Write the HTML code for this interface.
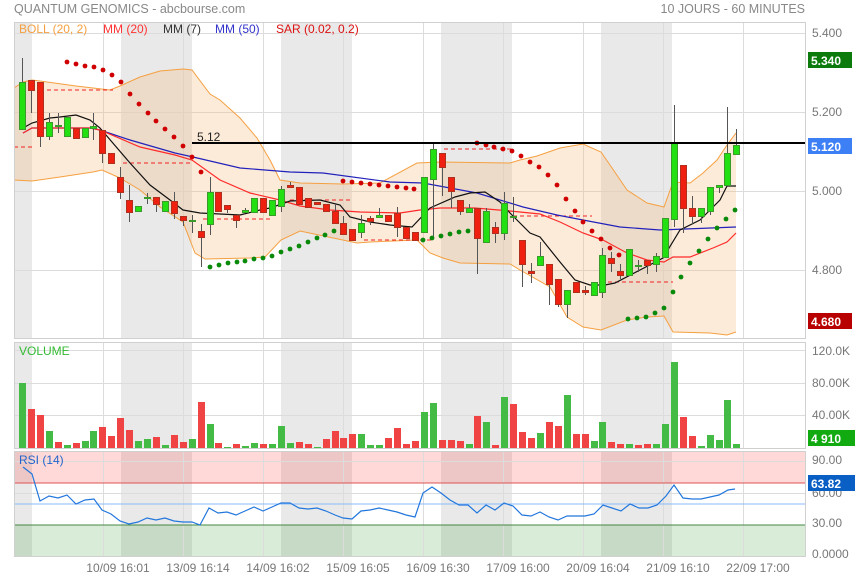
<!DOCTYPE html>
<html><head><meta charset="utf-8">
<style>
html,body{margin:0;padding:0;background:#fff;width:855px;height:579px;overflow:hidden}
svg{display:block;font-family:"Liberation Sans",sans-serif}
</style></head>
<body>
<svg id="s" width="855" height="579" xmlns="http://www.w3.org/2000/svg">
<g id="bg"></g>
<g id="grid" stroke="#dcdcdc" stroke-width="1"></g>
<g id="bb"></g>
<g id="lines"></g>
<g id="candles"></g>
<g id="dots"></g>
<g id="vol"></g>
<g id="rsi"></g>
<line x1="192" y1="143" x2="805" y2="143" stroke="#000" stroke-width="2"/>
<text x="197" y="141" font-size="12" fill="#222">5.12</text>
<g fill="none" stroke="#d0d0d0">
<rect x="14.5" y="22.5" width="791" height="316"/>
<rect x="14.5" y="342.5" width="791" height="106"/>
<rect x="14.5" y="451.5" width="791" height="105"/>
</g>
<text x="14" y="13" font-size="12.5" fill="#888">QUANTUM GENOMICS - abcbourse.com</text>
<text x="805" y="13" font-size="12.5" fill="#888" text-anchor="end">10 JOURS - 60 MINUTES</text>
<g font-size="12">
<text x="19" y="33" fill="#f5a040">BOLL (20, 2)</text>
<text x="103" y="33" fill="#ff3333">MM (20)</text>
<text x="163" y="33" fill="#333">MM (7)</text>
<text x="215" y="33" fill="#3333cc">MM (50)</text>
<text x="276" y="33" fill="#dd1111">SAR (0.02, 0.2)</text>
<text x="19" y="355" fill="#33bb33">VOLUME</text>
<text x="19" y="464" fill="#2266cc">RSI (14)</text>
</g>
<g font-size="12" fill="#777">
<text x="812" y="37">5.400</text>
<text x="812" y="116">5.200</text>
<text x="812" y="195">5.000</text>
<text x="812" y="274">4.800</text>
<text x="812" y="355">120.0K</text>
<text x="812" y="387">80.00K</text>
<text x="812" y="419">40.00K</text>
<text x="812" y="464">90.00</text>
<text x="812" y="497">60.00</text>
<text x="812" y="527">30.00</text>
<text x="812" y="558">0.0000</text>
</g>
<rect x="808" y="52" width="44" height="16" fill="#0d7a0d"/>
<text x="811" y="65" font-size="12" font-weight="bold" fill="#fff">5.340</text>
<rect x="808" y="138" width="44" height="16" fill="#3d7ff5"/>
<text x="811" y="151" font-size="12" font-weight="bold" fill="#fff">5.120</text>
<rect x="808" y="313" width="44" height="16" fill="#b80000"/>
<text x="811" y="326" font-size="12" font-weight="bold" fill="#fff">4.680</text>
<rect x="808" y="430" width="47" height="16" fill="#11aa11"/>
<text x="811" y="443" font-size="12" font-weight="bold" fill="#fff">4 910</text>
<rect x="808" y="475" width="47" height="16" fill="#0a5fc4"/>
<text x="811" y="488" font-size="12" font-weight="bold" fill="#fff">63.82</text>
<g font-size="12" fill="#777" text-anchor="middle">
<text x="118" y="572">10/09 16:01</text>
<text x="198" y="572">13/09 16:14</text>
<text x="278" y="572">14/09 16:02</text>
<text x="358" y="572">15/09 16:05</text>
<text x="438" y="572">16/09 16:30</text>
<text x="518" y="572">17/09 16:00</text>
<text x="598" y="572">20/09 16:04</text>
<text x="678" y="572">21/09 16:10</text>
<text x="758" y="572">22/09 17:00</text>
</g>
</svg>
<script>
var NS="http://www.w3.org/2000/svg";
function el(p,t,a){var e=document.createElementNS(NS,t);for(var k in a)e.setAttribute(k,a[k]);document.getElementById(p).appendChild(e);return e;}
// gray bands
[[14,32],[121,192],[281,352],[441,512],[601,672]].forEach(function(b){
 [[22,338],[342,448],[451,556]].forEach(function(p){el("bg","rect",{x:b[0],y:p[0],width:b[1]-b[0],height:p[1]-p[0],fill:"#e9e9e9"});});
});
// rsi zones
el("bg","rect",{x:14,y:451,width:791,height:32,fill:"rgba(255,60,60,0.2)"});
el("bg","rect",{x:14,y:525,width:791,height:31,fill:"rgba(60,160,60,0.2)"});
// grid
for(var x=103;x<=743;x+=80){[[22,338],[342,448],[451,556]].forEach(function(p){el("grid","line",{x1:x+.5,y1:p[0],x2:x+.5,y2:p[1]});});}
[33,112,191,270].forEach(function(y){el("grid","line",{x1:14,y1:y+.5,x2:805,y2:y+.5});});
[350,383,415].forEach(function(y){el("grid","line",{x1:14,y1:y+.5,x2:805,y2:y+.5});});
[461,493].forEach(function(y){el("grid","line",{x1:14,y1:y+.5,x2:805,y2:y+.5});});
el("grid","line",{x1:14,y1:483,x2:805,y2:483,stroke:"#dd5555"});
el("grid","line",{x1:14,y1:504,x2:805,y2:504,stroke:"#88bbff"});
el("grid","line",{x1:14,y1:525,x2:805,y2:525,stroke:"#448844"});
function pts(a){return a.map(function(p){return p.join(",")}).join(" ");}
var up=[[14,88],[23,82],[32,80],[40,81],[76,86],[110,90],[120,86],[140,77],[160,71],[183,69],[192,70],[210,94],[220,100],[240,118],[257,138],[270,160],[280,180],[300,183],[343,184],[380,183],[417,163],[440,162],[510,163],[520,160],[537,156],[560,148],[583,144],[601,152],[610,165],[627,190],[647,203],[664,207],[673,182],[690,183],[703,173],[717,160],[727,145],[736,133]];
var lo=[[14,180],[32,181],[60,177],[93,172],[102,170],[120,178],[140,190],[160,207],[183,222],[195,253],[205,259],[250,258],[265,257],[281,240],[300,231],[357,243],[370,242],[417,240],[430,253],[443,258],[460,263],[510,264],[520,270],[550,287],[567,317],[583,327],[601,330],[627,320],[647,317],[664,316],[673,332],[710,333],[727,335],[736,332]];
el("bb","polygon",{points:pts(up.concat(lo.slice().reverse())),fill:"rgba(248,190,130,0.3)"});
el("bb","polyline",{points:pts(up),fill:"none",stroke:"#f5a040","stroke-width":1});
el("bb","polyline",{points:pts(lo),fill:"none",stroke:"#f5a040","stroke-width":1});
// dashed red
[[14,33,147],[40,113,90],[123,192,163],[203,273,219],[290,352,200],[364,433,240],[444,512,149],[513,592,216],[601,673,282]].forEach(function(d){el("lines","line",{x1:d[0],x2:d[1],y1:d[2],y2:d[2],stroke:"#ee2222","stroke-dasharray":"4,3"});});
var mm50=[[23,133],[32,128],[90,128],[100,130],[130,140],[175,153],[193,157],[240,168],[290,172],[323,173],[390,182],[423,183],[450,188],[477,193],[523,207],[557,215],[583,220],[620,227],[660,230],[736,227]];
var mm20=[[23,133],[32,128],[90,128],[100,130],[140,147],[175,155],[192,160],[220,180],[250,193],[280,200],[300,206],[330,210],[360,212],[400,213],[420,210],[440,208],[475,208],[510,211],[540,214],[560,222],[583,233],[603,240],[627,253],[647,260],[664,262],[673,257],[690,257],[713,248],[727,242],[736,233]];
var mm7=[[23,128],[32,123],[50,118],[60,117],[76,115],[90,120],[100,128],[130,163],[150,185],[170,200],[183,210],[200,213],[240,215],[260,210],[270,208],[290,201],[320,200],[340,205],[350,217],[370,222],[390,225],[412,227],[430,208],[455,197],[470,193],[485,192],[500,202],[510,213],[530,233],[540,237],[560,262],[575,280],[590,285],[605,285],[615,283],[640,270],[663,258],[680,230],[700,220],[720,200],[727,186],[736,186]];
el("lines","polyline",{points:pts(mm50),fill:"none",stroke:"#2222bb","stroke-width":1.2});
el("lines","polyline",{points:pts(mm20),fill:"none",stroke:"#ff2a2a","stroke-width":1.2});
el("lines","polyline",{points:pts(mm7),fill:"none",stroke:"#111","stroke-width":1.2});
var C=[[82,129,58,129,1],[80,90,80,113,0],[82,136,82,147,0],[122,136,113,140,1],[125,126,113,133,1],[117,136,117,136,1],[128,138,128,138,0],[128,137,128,137,1],[126,128,113,140,1],[130,153,130,163,0],[153,163,153,163,0],[177,192,167,199,0],[200,212,185,222,0],[206,211,206,211,1],[197,198,193,204,1],[197,204,197,212,0],[201,211,201,211,1],[201,213,192,219,0],[216,220,216,226,0],[220,221,215,233,1],[231,237,224,267,0],[192,224,177,235,1],[192,211,192,211,0],[205,209,205,213,0],[215,220,215,228,0],[210,212,208,212,1],[198,212,198,212,1],[198,212,198,212,0],[200,215,200,215,1],[189,206,186,212,1],[185,187,182,187,0],[187,204,187,204,0],[198,207,198,207,0],[202,204,202,204,0],[204,211,204,211,0],[211,223,204,223,0],[223,234,216,234,0],[229,240,229,240,0],[223,232,215,238,1],[218,221,216,225,0],[215,217,208,217,1],[215,221,215,221,0],[213,227,207,237,0],[227,238,227,238,0],[232,240,232,240,0],[177,232,177,232,1],[149,179,143,237,1],[153,167,153,196,0],[177,191,177,208,0],[200,211,200,215,0],[208,212,204,212,1],[208,238,208,274,0],[211,242,208,243,1],[227,233,222,243,0],[203,233,192,240,1],[216,217,197,222,1],[240,264,240,287,0],[271,273,263,283,0],[256,265,242,265,1],[264,284,264,305,0],[279,304,279,307,0],[290,304,290,318,1],[282,292,282,292,0],[290,292,286,295,0],[282,295,282,295,1],[255,292,248,298,1],[258,263,252,272,0],[271,275,264,279,0],[249,275,249,275,1],[265,266,260,272,1],[260,265,260,274,0],[256,264,253,272,1],[218,257,218,257,1],[143,219,105,227,1],[165,208,165,233,0],[208,216,196,224,0],[208,216,208,223,1],[187,211,187,215,1],[185,187,185,193,1],[153,185,107,185,1],[145,154,129,154,1]];
C.forEach(function(c,i){var x=Math.round(22+8.93*i);
 el("candles","line",{x1:x+.5,x2:x+.5,y1:c[2],y2:c[3],stroke:"#555"});
 el("candles","rect",{x:x-2.5,y:c[0]+.5,width:6,height:Math.max(1,c[1]-c[0]),fill:c[4]?"#22e011":"#f02010",stroke:c[4]?"#3a9a2a":"#b03020","stroke-width":1});
});
var R=[[67,62],[76,64],[85,66],[94,67],[103,70],[112,75],[121,82],[130,94],[139,104],[148,113],[156,121],[165,129],[174,137],[183,146],[192,157],[201,172],[343,181],[352,182],[361,183],[370,184],[379,185],[388,186],[397,187],[406,188],[414,189],[477,143],[486,145],[494,147],[503,149],[512,151],[521,156],[530,162],[539,167],[548,175],[557,185],[566,199],[575,211],[583,222],[592,231],[601,239],[610,248],[619,255]];
var G=[[210,267],[219,265],[228,263],[237,262],[245,261],[254,259],[263,258],[272,256],[281,252],[290,249],[299,246],[308,242],[317,238],[325,235],[334,231],[423,240],[432,238],[441,236],[450,234],[459,232],[468,231],[628,319],[637,318],[646,317],[655,313],[664,308],[673,292],[681,277],[690,263],[699,251],[708,239],[717,228],[726,219],[735,210]];
R.forEach(function(p){el("dots","circle",{cx:p[0],cy:p[1],r:2.4,fill:"#d00000"});});
G.forEach(function(p){el("dots","circle",{cx:p[0],cy:p[1],r:2.4,fill:"#0a8a0a"});});
var V=[[383,1],[409,0],[415,0],[431,1],[442,0],[445,1],[443,0],[441,1],[431,1],[427,0],[436,0],[418,0],[430,0],[441,1],[439,1],[437,0],[445,1],[435,0],[442,0],[439,1],[402,0],[424,1],[443,0],[447,1],[444,0],[446,1],[443,1],[444,0],[444,1],[426,1],[443,1],[442,0],[444,0],[447,1],[439,0],[431,0],[438,0],[434,0],[434,1],[445,1],[445,1],[438,0],[428,0],[444,0],[441,0],[412,1],[403,1],[440,0],[440,0],[441,0],[444,1],[416,0],[422,1],[445,0],[397,1],[404,0],[432,0],[438,0],[433,1],[422,0],[426,0],[395,1],[434,0],[434,0],[441,1],[422,1],[442,0],[444,0],[444,1],[445,0],[444,0],[444,1],[424,1],[362,1],[417,0],[436,0],[446,1],[435,1],[440,1],[400,1],[444,1]];
V.forEach(function(v,i){var x=Math.round(22+8.93*i);el("vol","rect",{x:x-3,y:v[0],width:7,height:448-v[0],fill:v[1]?"#44bb44":"#f04444"});});
var RS=[[23,467],[32,474],[40,501],[49,496],[58,498],[67,495],[76,504],[85,500],[94,499],[102,510],[111,514],[120,521],[129,524],[138,522],[147,518],[156,520],[165,518],[174,521],[183,522],[192,522],[200,525],[209,508],[218,513],[227,512],[236,515],[245,511],[254,507],[263,511],[272,507],[281,503],[290,503],[299,508],[308,509],[317,508],[326,511],[335,515],[343,518],[352,519],[361,511],[370,510],[379,508],[388,510],[397,512],[406,515],[415,517],[423,493],[432,487],[441,493],[450,500],[459,505],[468,505],[477,513],[486,505],[495,510],[504,503],[513,506],[522,515],[531,516],[540,512],[549,517],[558,520],[567,516],[576,516],[585,516],[594,514],[603,505],[612,508],[621,511],[630,504],[639,508],[648,508],[657,505],[666,496],[674,485],[683,498],[692,499],[701,499],[710,497],[719,495],[728,490],[735,489]];
el("rsi","polyline",{points:pts(RS),fill:"none",stroke:"#2277dd","stroke-width":1.2});
</script>
</body></html>
